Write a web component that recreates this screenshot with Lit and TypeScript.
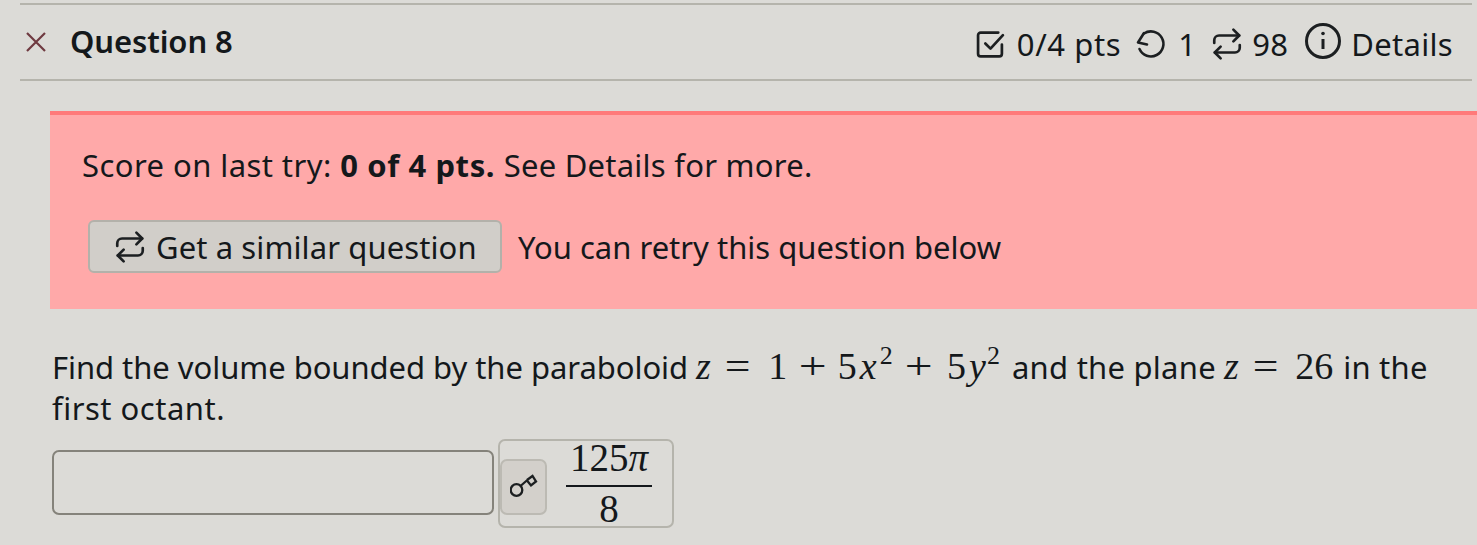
import { LitElement, html, css } from "lit";
import { customElement } from "lit/decorators.js";

const retry = html`<svg class="ic" viewBox="0 0 32 32" width="34" height="34" fill="none" stroke="#1c1f21" stroke-width="2.500" stroke-linecap="round" stroke-linejoin="round"><path d="M4 15v-2.500a4.500 4.500 0 0 1 4.500-4.500h19"/><path d="M22 2.500l5.500 5.500-5.500 5.500"/><path d="M28 17v2.500a4.500 4.500 0 0 1-4.500 4.500h-19"/><path d="M10 18.500l-5.500 5.500 5.500 5.500"/></svg>`;

@customElement("app-root")
export class AppRoot extends LitElement {
  static styles = css`
    :host { display: block; width: 1477px; height: 545px; overflow: hidden; background: #dcdbd7; color: #14181b;
      font-family: "Noto Sans", sans-serif; font-size: 31px; letter-spacing: 0.2px; }
    .head { margin: 3px 5px 0 20px; height: 74px; border-top: 2px solid #b5b4ac; border-bottom: 2px solid #b5b4ac;
      display: flex; align-items: center; justify-content: space-between; padding-right: 19px; }
    .left { display: flex; align-items: center; gap: 24px; padding-left: 6px; }
    .title { font-weight: 600; letter-spacing: -0.1px; margin-top: -2px; }
    .right { display: flex; align-items: center; margin-top: 4px; letter-spacing: 0.3px; }
    .pts { letter-spacing: 0.6px; }
    .ic { display: block; flex: none; }
    .alert { margin: 30px 0 0 50px; height: 164px; background: #ffa9a9; border-top: 4px solid #ff7a7a;
      padding: 30px 0 0 32px; }
    .score { letter-spacing: 0.43px; line-height: 40px; }
    .score b { font-weight: 700; letter-spacing: 0.6px; }
    .tail { letter-spacing: 0.25px; }
    .row { display: flex; align-items: center; margin: 35px 0 0 6px; gap: 16px; letter-spacing: 0; }
    .btn { width: 414px; height: 53px; box-sizing: border-box; background: #d1cec9; border: 2px solid #b3b1aa; border-radius: 6px;
      display: flex; align-items: center; gap: 9px; padding-left: 23px; letter-spacing: 0.1px; }
    .q { margin: 37px 40px 0 52px; line-height: 41px; letter-spacing: -0.05px; }
    .t { letter-spacing: 0.25px; }
    .o { letter-spacing: 0.5px; }
    .m { font-family: "Liberation Serif", serif; font-size: 38px; white-space: nowrap; letter-spacing: 0; }
    .m sup { font-size: 26px; line-height: 0; vertical-align: 15px; margin: 0 0 0 3px; }
    .m .y2 { margin: 0 4px 0 1px; }
    .m .x { margin-left: 3px; }
    .m .y { margin-left: 3px; }
    .op { display: inline-block; margin: 0 14px 0 15px; transform: scaleX(1.3); }
    .op2 { margin-right: 18px; }
    .eq { display: inline-block; margin: 0 20px 0 16px; transform: scaleX(1.2); }
    .eq2 { margin-right: 19px; }
    .after { margin-left: 2px; }
    .ans { display: flex; margin: 10px 0 0 52px; align-items: flex-start; gap: 4px; }
    .input { width: 442px; height: 65px; margin-top: 11px; box-sizing: border-box; border: 2px solid #85837b; border-radius: 7px; }
    .box { width: 176px; height: 89px; box-sizing: border-box; border: 2px solid #b5b4ac; border-radius: 7px;
      display: flex; align-items: flex-start; }
    .key { width: 47px; height: 56px; margin-top: 18px; box-sizing: border-box; background: #d3d0cb; border: 2px solid #bcbab3; border-radius: 7px;
      display: flex; align-items: center; justify-content: center; }
    .frac { margin-left: 19px; width: 86px; display: flex; flex-direction: column; align-items: center;
      font-family: "Liberation Serif", serif; font-size: 39px; line-height: 42px; letter-spacing: 0; }
    .num { height: 44px; line-height: 34px; border-bottom: 2px solid #14181b; width: 100%; text-align: center; }
    .den { height: 42px; margin-top: 1px; }
  `;
  render() {
    return html`
      <div class="head">
        <div class="left">
          <svg class="ic" viewBox="0 0 20 20" width="20" height="20" fill="none" stroke="#6f3a40" stroke-width="2.200"><path d="M1 1l18 18M19 1L1 19"/></svg>
          <span class="title">Question 8</span>
        </div>
        <div class="right">
          <svg class="ic" style="margin-right:12px" viewBox="0 0 28 28" width="29" height="29" fill="none" stroke="#1c1f21" stroke-width="2.600" stroke-linecap="round" stroke-linejoin="round"><path d="M25 14v9a2.500 2.500 0 0 1-2.500 2.500h-18a2.500 2.500 0 0 1-2.500-2.500v-18a2.500 2.500 0 0 1 2.500-2.500h17"/><path d="M9 13l5 5 12-13"/></svg>
          <span class="pts">0/4 pts</span>
          <svg class="ic" style="margin:0 12px 0 15px" viewBox="0 0 30 30" width="30" height="30" fill="none" stroke="#1c1f21" stroke-width="2.600" stroke-linecap="round" stroke-linejoin="round"><path d="M8 4.500A12.500 12.500 0 1 1 3.500 20"/><path d="M8 4l-6 9.500 9 2"/></svg>
          <span>1</span>
          <span style="margin:0 8px 0 14px">${retry}</span>
          <span>98</span>
          <svg class="ic" style="margin:-6px 10px 0 17px" viewBox="0 0 36 36" width="36" height="36" fill="none" stroke="#1c1f21" stroke-width="3"><circle cx="18" cy="18" r="16.500"/><path d="M18 16v10"/><circle cx="18" cy="10.500" r="1.800" fill="#1c1f21" stroke="none"/></svg>
          <span>Details</span>
        </div>
      </div>
      <div class="alert">
        <div class="score">Score on last try: <b>0 of 4 pts.</b> <span class="tail">See Details for more.</span></div>
        <div class="row">
          <div class="btn">${retry}<span>Get a similar question</span></div>
          <span>You can retry this question below</span>
        </div>
      </div>
      <div class="q">Find the volume bounded by the paraboloid <span class="m"><i>z</i><span class="eq">=</span>1<span class="op">+</span>5<i class="x">x</i><sup>2</sup><span class="op op2">+</span>5<i class="y">y</i><sup class="y2">2</sup></span> <span class="t">and the plane</span> <span class="m"><i>z</i><span class="eq eq2">=</span>26</span> <span class="t after">in the</span><br><span class="o">first octant.</span></div>
      <div class="ans">
        <div class="input"></div>
        <div class="box">
          <div class="key"><svg class="ic" viewBox="0 0 28 28" width="28" height="28" fill="none" stroke="#1c1f21" stroke-width="2.300"><circle cx="6.500" cy="17" r="5.800"/><path d="M10.500 13l8-7M17 7.500l4 5 5-4-3.500-5.500-5.500 4"/></svg></div>
          <div class="frac"><div class="num">125<i>π</i></div><div class="den">8</div></div>
        </div>
      </div>
    `;
  }
}
